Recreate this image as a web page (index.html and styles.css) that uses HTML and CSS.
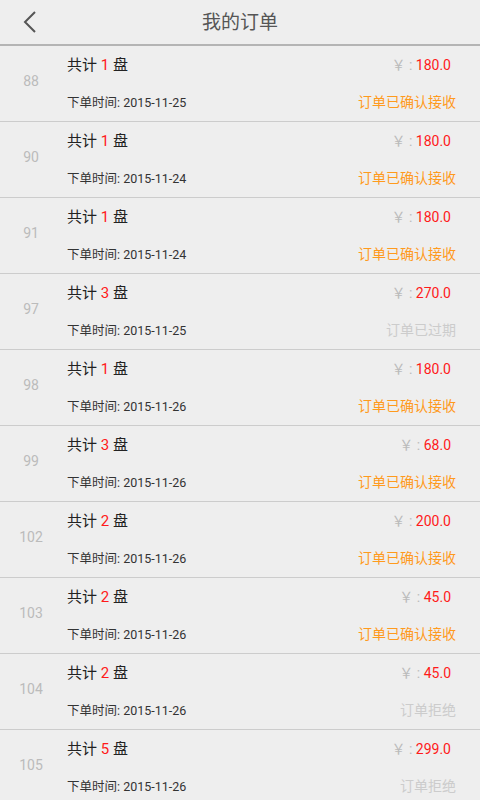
FILE: index.html
```html
<!DOCTYPE html>
<html lang="zh-CN">
<head>
    <meta charset="UTF-8">
    <meta name="viewport" content="width=device-width, initial-scale=1.0">
    <title>我的订单</title>
    <link rel="stylesheet" href="styles.css">
</head>
<body>
    <div class="header">
        <svg class="back" width="16" height="24" viewBox="0 0 16 24">
            <path d="M13 2 L3 12 L13 22" fill="none" stroke="#555" stroke-width="2"/>
        </svg>
        <h1>我的订单</h1>
    </div>
    <ul class="orders">
        <li class="order">
            <div class="num">88</div>
            <div class="info">
                <div class="line">
                    <span class="total">共计 <em>1</em> 盘</span>
                    <span class="price">￥ : <em>180.0</em></span>
                </div>
                <div class="line">
                    <span class="time">下单时间: 2015-11-25</span>
                    <span class="status ok">订单已确认接收</span>
                </div>
            </div>
        </li>
        <li class="order">
            <div class="num">90</div>
            <div class="info">
                <div class="line">
                    <span class="total">共计 <em>1</em> 盘</span>
                    <span class="price">￥ : <em>180.0</em></span>
                </div>
                <div class="line">
                    <span class="time">下单时间: 2015-11-24</span>
                    <span class="status ok">订单已确认接收</span>
                </div>
            </div>
        </li>
        <li class="order">
            <div class="num">91</div>
            <div class="info">
                <div class="line">
                    <span class="total">共计 <em>1</em> 盘</span>
                    <span class="price">￥ : <em>180.0</em></span>
                </div>
                <div class="line">
                    <span class="time">下单时间: 2015-11-24</span>
                    <span class="status ok">订单已确认接收</span>
                </div>
            </div>
        </li>
        <li class="order">
            <div class="num">97</div>
            <div class="info">
                <div class="line">
                    <span class="total">共计 <em>3</em> 盘</span>
                    <span class="price">￥ : <em>270.0</em></span>
                </div>
                <div class="line">
                    <span class="time">下单时间: 2015-11-25</span>
                    <span class="status off">订单已过期</span>
                </div>
            </div>
        </li>
        <li class="order">
            <div class="num">98</div>
            <div class="info">
                <div class="line">
                    <span class="total">共计 <em>1</em> 盘</span>
                    <span class="price">￥ : <em>180.0</em></span>
                </div>
                <div class="line">
                    <span class="time">下单时间: 2015-11-26</span>
                    <span class="status ok">订单已确认接收</span>
                </div>
            </div>
        </li>
        <li class="order">
            <div class="num">99</div>
            <div class="info">
                <div class="line">
                    <span class="total">共计 <em>3</em> 盘</span>
                    <span class="price">￥ : <em>68.0</em></span>
                </div>
                <div class="line">
                    <span class="time">下单时间: 2015-11-26</span>
                    <span class="status ok">订单已确认接收</span>
                </div>
            </div>
        </li>
        <li class="order">
            <div class="num">102</div>
            <div class="info">
                <div class="line">
                    <span class="total">共计 <em>2</em> 盘</span>
                    <span class="price">￥ : <em>200.0</em></span>
                </div>
                <div class="line">
                    <span class="time">下单时间: 2015-11-26</span>
                    <span class="status ok">订单已确认接收</span>
                </div>
            </div>
        </li>
        <li class="order">
            <div class="num">103</div>
            <div class="info">
                <div class="line">
                    <span class="total">共计 <em>2</em> 盘</span>
                    <span class="price">￥ : <em>45.0</em></span>
                </div>
                <div class="line">
                    <span class="time">下单时间: 2015-11-26</span>
                    <span class="status ok">订单已确认接收</span>
                </div>
            </div>
        </li>
        <li class="order">
            <div class="num">104</div>
            <div class="info">
                <div class="line">
                    <span class="total">共计 <em>2</em> 盘</span>
                    <span class="price">￥ : <em>45.0</em></span>
                </div>
                <div class="line">
                    <span class="time">下单时间: 2015-11-26</span>
                    <span class="status off">订单拒绝</span>
                </div>
            </div>
        </li>
        <li class="order">
            <div class="num">105</div>
            <div class="info">
                <div class="line">
                    <span class="total">共计 <em>5</em> 盘</span>
                    <span class="price">￥ : <em>299.0</em></span>
                </div>
                <div class="line">
                    <span class="time">下单时间: 2015-11-26</span>
                    <span class="status off">订单拒绝</span>
                </div>
            </div>
        </li>
    </ul>
</body>
</html>
```

FILE: styles.css
```css
body {
    margin: 0;
    padding: 0;
    background-color: #eeeeee;
    font-family: Roboto, "Noto Sans CJK SC", sans-serif;
    overflow: hidden;
}
.header {
    position: relative;
    height: 44px;
    border-bottom: 2px solid #b4b4b4;
    display: flex;
    align-items: center;
    justify-content: center;
}
.header .back {
    position: absolute;
    left: 22px;
    top: 10px;
}
.header h1 {
    margin: 0 0 3px;
    font-size: 19px;
    font-weight: normal;
    color: #555;
}
.orders {
    list-style: none;
    margin: 0;
    padding: 0;
}
.order {
    height: 75px;
    border-bottom: 1px solid #cccccc;
    display: flex;
    align-items: center;
}
.num {
    width: 62px;
    text-align: center;
    font-size: 14px;
    color: #bbbbbb;
    margin-top: -6px;
}
.info {
    flex: 1;
    display: flex;
    flex-direction: column;
    justify-content: space-between;
    height: 75px;
    padding: 7px 24px 10px 5px;
    box-sizing: border-box;
}
.line {
    display: flex;
    justify-content: space-between;
    align-items: center;
}
em {
    font-style: normal;
}
.total {
    font-size: 15px;
    color: #222;
}
.total em {
    color: #ff1a1a;
}
.price {
    font-size: 14px;
    color: #bbbbbb;
    margin-right: 5px;
}
.price em {
    color: #ff1a1a;
}
.time {
    font-size: 12.5px;
    color: #333;
}
.status {
    font-size: 14px;
}
.status.ok {
    color: #ff9a1c;
}
.status.off {
    color: #cccccc;
}
```
